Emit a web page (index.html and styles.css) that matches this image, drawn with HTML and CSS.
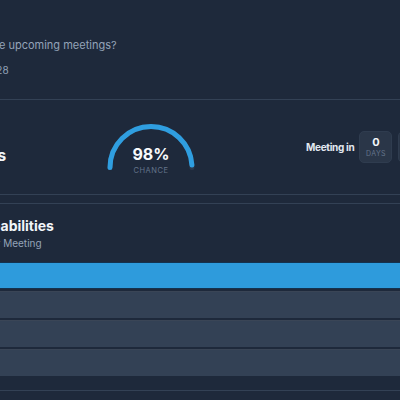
FILE: index.html
```html
<!DOCTYPE html>
<html lang="en">
<head>
<meta charset="utf-8">
<title>Meetings</title>
<link rel="stylesheet" href="styles.css">
</head>
<body>
<div class="page">
  <section class="card">
    <div class="card-head">
      <p class="question">Will you attend the upcoming meetings?</p>
      <p class="date">Next meeting: Dec 28</p>
    </div>
    <div class="stats">
      <div class="stat-label">All meetings</div>
      <div class="gauge">
        <svg class="gauge-arc" width="92" height="56" viewBox="0 0 92 56">
          <path d="M 5 46.5 A 41 41 0 0 1 87 46.5" fill="none" stroke="#2b3a4e" stroke-width="5" stroke-linecap="round"/>
          <path d="M 5 46.5 A 41 41 0 0 1 87 46.5" fill="none" stroke="#2f9ee0" stroke-width="5" stroke-linecap="round" pathLength="100" stroke-dasharray="98 100"/>
        </svg>
        <div class="gauge-text">
          <span class="gauge-value">98%</span>
          <span class="gauge-caption">CHANCE</span>
        </div>
      </div>
      <div class="countdown">
        <span class="countdown-label">Meeting in</span>
        <div class="unit"><span class="unit-num">0</span><span class="unit-name">DAYS</span></div>
        <div class="unit"><span class="unit-num">4</span><span class="unit-name">HRS</span></div>
        <div class="unit"><span class="unit-num">12</span><span class="unit-name">MIN</span></div>
      </div>
    </div>
  </section>
  <section class="card">
    <div class="card-title">
      <h2 class="title">Meeting Probabilities</h2>
      <p class="subtitle">Estimated odds per Meeting</p>
    </div>
    <div class="bars">
      <div class="bar bar-active"></div>
      <div class="bar"></div>
      <div class="bar"></div>
      <div class="bar"></div>
    </div>
  </section>
</div>
</body>
</html>
```
FILE: styles.css
```css
html, body {
  margin: 0;
  height: 400px;
  overflow: hidden;
  background: #1e293b;
}
body {
  font-family: Inter, "Noto Sans", sans-serif;
  color: #e2e8f0;
}
p, h2 { margin: 0; }

.page {
  width: 820px;
  margin: -10px 0 0 -110px;
  display: flex;
  flex-direction: column;
  gap: 8px;
}
.card {
  border: 1px solid #334155;
  border-radius: 8px;
}
.card-head {
  padding: 46px 18px 22px;
  border-bottom: 1px solid #334155;
}
.question {
  font-size: 11px;
  line-height: 16px;
  color: #94a3b8;
}
.date {
  margin-top: 10px;
  margin-left: -3px;
  font-size: 10px;
  line-height: 14px;
  color: #94a3b8;
}

.stats {
  display: flex;
  align-items: center;
  height: 94px;
  padding: 0 18px;
}
.stat-label {
  width: 196px;
  flex: none;
  margin-top: 16px;
  font-size: 16px;
  line-height: 18px;
  font-weight: 700;
  color: #f1f5f9;
}
.gauge {
  width: 92px;
  height: 56px;
  flex: none;
  margin-top: 4px;
  display: grid;
}
.gauge-arc, .gauge-text {
  grid-area: 1 / 1;
}
.gauge-text {
  padding-top: 25px;
  display: flex;
  flex-direction: column;
  align-items: center;
}
.gauge-value {
  font-size: 16px;
  line-height: 17px;
  font-weight: 700;
  color: #f8fafc;
}
.gauge-caption {
  margin-top: 3px;
  font-size: 7.5px;
  line-height: 9px;
  letter-spacing: 0.5px;
  color: #64748b;
}

.countdown {
  margin-left: 109px;
  display: flex;
  align-items: center;
  gap: 6px;
}
.countdown-label {
  margin-right: -1px;
  font-size: 10px;
  letter-spacing: -0.3px;
  font-weight: 700;
  color: #e2e8f0;
}
.unit {
  width: 33px;
  height: 32px;
  box-sizing: border-box;
  border-radius: 5px;
  background: #2a3648;
  border: 1px solid #2f3c4f;
  display: flex;
  flex-direction: column;
  align-items: center;
  justify-content: center;
}
.unit-num {
  font-size: 11px;
  line-height: 12px;
  font-weight: 700;
  color: #f1f5f9;
}
.unit-name {
  margin-top: 1px;
  font-size: 7px;
  line-height: 9px;
  letter-spacing: 0.4px;
  color: #64748b;
}

.card-title {
  padding: 13px 18px 0;
}
.title {
  font-size: 14px;
  line-height: 18px;
  font-weight: 700;
  color: #f1f5f9;
}
.subtitle {
  margin-top: 2px;
  font-size: 10px;
  line-height: 13px;
  color: #94a3b8;
}
.bars {
  margin-top: 12px;
  padding: 0 18px 14px;
  display: flex;
  flex-direction: column;
  gap: 2px;
}
.bar {
  height: 27px;
  box-sizing: border-box;
  background: #334155;
  border-top: 1px solid #3a4556;
}
.bar-active {
  background: #2e9bdc;
  border: 1px solid #14324f;
}
```
